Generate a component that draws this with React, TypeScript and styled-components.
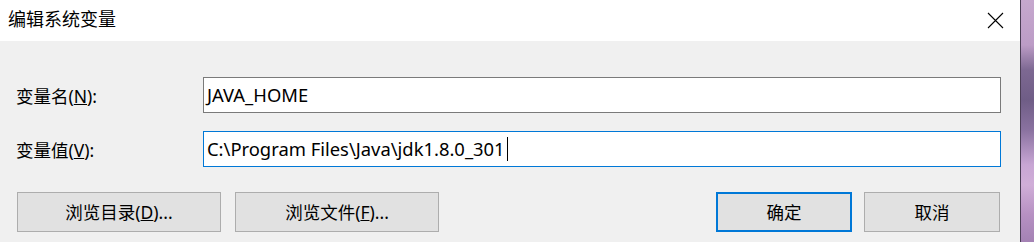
import React from "react";
import styled, { createGlobalStyle } from "styled-components";

const Global = createGlobalStyle`
  html, body { margin: 0; padding: 0; background: #f0f0f0; }
  #root { width: 1034px; height: 242px; overflow: hidden; }
  * { box-sizing: border-box; }
`;

const FONT = `"Noto Sans", "Noto Sans CJK SC", sans-serif`;

const Screen = styled.div`
  display: flex;
  width: 1034px;
  height: 242px;
`;

const Dialog = styled.div`
  width: 1020px;
  height: 242px;
  display: flex;
  flex-direction: column;
  background: #f0f0f0;
  font-family: ${FONT};
  color: #000;
`;

const Desktop = styled.div`
  width: 14px;
  height: 242px;
  border-left: 1px solid #4a3d55;
  background: linear-gradient(
    to bottom,
    #c6a8ce 0px,
    #bc9cc6 45px,
    #7d6892 70px,
    #6f5d86 100px,
    #8a72a0 130px,
    #c8a6d4 165px,
    #d0aed8 185px,
    #b690c2 215px,
    #a482b4 242px
  );
`;

const TitleBar = styled.div`
  height: 41px;
  background: #fff;
  display: flex;
  align-items: center;
  justify-content: space-between;
  padding: 0 16px 3px 8px;
`;

const Title = styled.div`
  font-size: 18px;
  line-height: 20px;
`;

const CloseIcon = styled.svg`
  width: 17px;
  height: 17px;
  display: block;
  margin-top: 2px;
`;

const Body = styled.div`
  flex: 1;
  display: flex;
  flex-direction: column;
  padding: 36px 19px 0 16px;
`;

const Row = styled.div`
  display: flex;
  align-items: center;
  margin-bottom: 18px;
`;

const Label = styled.div`
  width: 187px;
  font-size: 17.5px;
  line-height: 20px;
  padding-top: 1px;
`;

const Field = styled.div<{ $focused?: boolean }>`
  flex: 1;
  height: 36px;
  background: #fff;
  border: 1px solid ${(p) => (p.$focused ? "#0078d7" : "#7a7a7a")};
  display: flex;
  align-items: center;
  padding: 0 0 0 3px;
  font-size: 18.4px;
  line-height: 24px;
  white-space: pre;
`;

const Caret = styled.span`
  display: inline-block;
  width: 1px;
  height: 24px;
  background: #000;
  margin-left: 2px;
`;

const Buttons = styled.div`
  display: flex;
  align-items: center;
  padding: 7px 0 0 1px;
`;

const Button = styled.div<{ $w: number; $primary?: boolean; $gap: number }>`
  width: ${(p) => p.$w}px;
  height: 40px;
  margin-right: ${(p) => p.$gap}px;
  background: #e1e1e1;
  border: ${(p) => (p.$primary ? "2px solid #0078d7" : "1px solid #adadad")};
  display: flex;
  align-items: center;
  justify-content: center;
  font-size: 17.5px;
  line-height: 20px;
`;

const Spacer = styled.div`
  flex: 1;
`;

export default function App() {
  return (
    <>
      <Global />
      <Screen>
        <Dialog>
          <TitleBar>
            <Title>编辑系统变量</Title>
            <CloseIcon viewBox="0 0 17 17">
              <path d="M1 1 L16 16 M16 1 L1 16" stroke="#000" strokeWidth="1.1" fill="none" />
            </CloseIcon>
          </TitleBar>
          <Body>
            <Row>
              <Label>
                变量名(<u>N</u>):
              </Label>
              <Field>JAVA_HOME</Field>
            </Row>
            <Row>
              <Label>
                变量值(<u>V</u>):
              </Label>
              <Field $focused>
                C:\Program Files\Java\jdk1.8.0_301
                <Caret />
              </Field>
            </Row>
            <Buttons>
              <Button $w={204} $gap={14}>
                浏览目录(<u>D</u>)...
              </Button>
              <Button $w={204} $gap={0}>
                浏览文件(<u>F</u>)...
              </Button>
              <Spacer />
              <Button $w={136} $gap={12} $primary>
                确定
              </Button>
              <Button $w={136} $gap={1}>
                取消
              </Button>
            </Buttons>
          </Body>
        </Dialog>
        <Desktop />
      </Screen>
    </>
  );
}
